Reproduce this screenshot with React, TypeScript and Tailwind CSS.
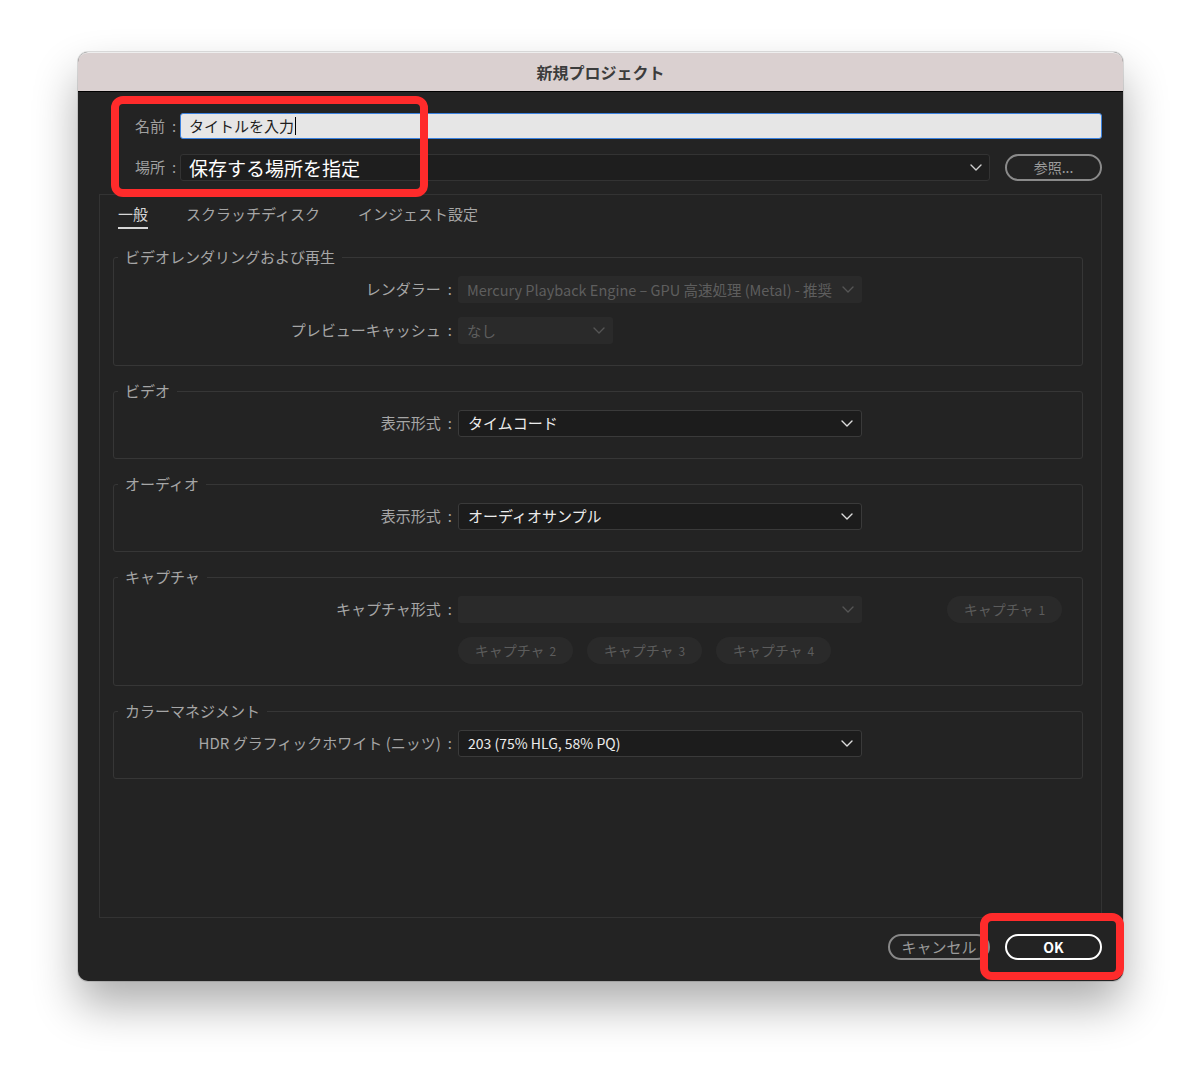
import React from 'react';

const FONT = "font-['Noto_Sans_CJK_JP','Noto_Sans',sans-serif]";

function Chevron({ color }: { color: string }) {
  return (
    <svg width="12" height="7" viewBox="0 0 12 7" fill="none" className="shrink-0">
      <path d="M1 1l5 5 5-5" stroke={color} strokeWidth="1.4" strokeLinecap="round" strokeLinejoin="round" />
    </svg>
  );
}

function Select({ value, width, disabled }: { value: string; width: string; disabled?: boolean }) {
  return (
    <div
      className={`${width} h-[27px] flex items-center justify-between pl-[9px] pr-[8px] rounded-[3px] ${
        disabled ? 'bg-[#2a2a2a] text-[#5e5e5e] text-[14.5px]' : 'bg-[#1c1c1c] border border-[#3a3a3a] text-[#ececec] text-[15px]'
      }`}
    >
      <span className="truncate">{value}</span>
      <Chevron color={disabled ? '#555555' : '#dddddd'} />
    </div>
  );
}

function Label({ text }: { text: string }) {
  return (
    <>
      {text}
      <span className="ml-[7px]">:</span>
    </>
  );
}

function Row({ label, children }: { label: string; children: React.ReactNode }) {
  return (
    <div className="flex items-center">
      <div className="w-[338px] text-right text-[15px] text-[#a6a6a6] whitespace-nowrap">
        <Label text={label} />
      </div>
      <div className="ml-[6px] flex items-center">{children}</div>
    </div>
  );
}

function Group({ title, children }: { title: string; children: React.ReactNode }) {
  return (
    <fieldset className="border border-[#363636] rounded-[3px] pb-[21px]">
      <legend className="ml-[4px] px-[7px] text-[15px] leading-[20px] text-[#a6a6a6]">{title}</legend>
      <div className="mt-[9px] flex flex-col gap-[14px]">{children}</div>
    </fieldset>
  );
}

function CaptureButton({ n }: { n: number }) {
  return (
    <div className="w-[115px] h-[27px] rounded-full bg-[#2a2a2a] text-[#5c5c5c] text-[14px] flex items-center justify-center gap-[5px]">
      キャプチャ<span className="text-[12px]">{n}</span>
    </div>
  );
}

export default function App() {
  return (
    <div className={`min-h-[1084px] bg-white pt-[52px] pl-[78px] ${FONT}`}>
      <div className="relative w-[1045px] h-[929px] rounded-[10px] bg-[#232323] flex flex-col shadow-[0_24px_45px_rgba(0,0,0,0.32),0_0_0_1px_rgba(0,0,0,0.12)]">
        <div className="h-[40px] shrink-0 rounded-t-[10px] bg-[#dad0d0] border-t border-[#eee] border-b border-b-black flex items-center justify-center">
          <span className="text-[16px] font-bold text-[#3c3c3c]">新規プロジェクト</span>
        </div>

        <div className="flex-1 flex flex-col px-[21px] pt-[21px] pb-[21px]">
          <div className="flex items-center pl-[36px]">
            <div className="w-[45px] text-[15px] text-[#a0a0a0] whitespace-nowrap">
              <Label text="名前" />
            </div>
            <div className="flex-1 h-[26px] bg-[#e6e6e6] border border-[#3b82e0] rounded-[3px] flex items-center pl-[8px] text-[15px] text-[#1e1e1e]">
              タイトルを入力<span className="ml-[1px] w-[1px] h-[18px] bg-black" />
            </div>
          </div>

          <div className="flex items-center pl-[36px] mt-[15px]">
            <div className="w-[45px] text-[15px] text-[#a0a0a0] whitespace-nowrap">
              <Label text="場所" />
            </div>
            <div className="flex-1 h-[27px] bg-[#1e1e1e] border border-[#333] rounded-[3px] flex items-center justify-between pl-[8px] pr-[7px]">
              <span className="text-[19px] text-white leading-none">保存する場所を指定</span>
              <Chevron color="#d0d0d0" />
            </div>
            <button className="ml-[15px] w-[97px] h-[27px] rounded-full border-2 border-[#8a8a8a] text-[14px] text-[#9c9c9c]">
              参照...
            </button>
          </div>

          <div className="mt-[13px] flex-1 border border-[#333] pt-[9px] pl-[13px] pr-[18px]">
            <div className="flex items-start ml-[5px] gap-[38px] text-[15px] leading-[20px]">
              <div className="pb-[3px] border-b-2 border-[#d6d6d6] text-[#d6d6d6]">一般</div>
              <div className="pb-[3px] text-[#a6a6a6]">スクラッチディスク</div>
              <div className="pb-[3px] text-[#a6a6a6]">インジェスト設定</div>
            </div>

            <div className="mt-[18px] flex flex-col gap-[15px]">
              <Group title="ビデオレンダリングおよび再生">
                <Row label="レンダラー">
                  <Select width="w-[404px]" disabled value="Mercury Playback Engine – GPU 高速処理 (Metal) - 推奨" />
                </Row>
                <Row label="プレビューキャッシュ">
                  <Select width="w-[155px]" disabled value="なし" />
                </Row>
              </Group>

              <Group title="ビデオ">
                <Row label="表示形式">
                  <Select width="w-[404px]" value="タイムコード" />
                </Row>
              </Group>

              <Group title="オーディオ">
                <Row label="表示形式">
                  <Select width="w-[404px]" value="オーディオサンプル" />
                </Row>
              </Group>

              <Group title="キャプチャ">
                <Row label="キャプチャ形式">
                  <Select width="w-[404px]" disabled value="" />
                  <div className="ml-[85px]">
                    <CaptureButton n={1} />
                  </div>
                </Row>
                <div className="flex items-center ml-[344px] gap-[14px]">
                  <CaptureButton n={2} />
                  <CaptureButton n={3} />
                  <CaptureButton n={4} />
                </div>
              </Group>

              <Group title="カラーマネジメント">
                <Row label="HDR グラフィックホワイト (ニッツ)">
                  <div className="w-[404px] h-[27px] flex items-center justify-between pl-[9px] pr-[8px] rounded-[3px] bg-[#1c1c1c] border border-[#3a3a3a] text-[14px] text-[#ececec]">
                    <span>203 (75% HLG, 58% PQ)</span>
                    <Chevron color="#dddddd" />
                  </div>
                </Row>
              </Group>
            </div>
          </div>

          <div className="mt-[16px] flex justify-end gap-[15px]">
            <button className="w-[102px] h-[26px] rounded-full border-2 border-[#888] text-[15px] text-[#9a9a9a] flex items-center justify-center">
              キャンセル
            </button>
            <button className="w-[97px] h-[26px] rounded-full border-2 border-white text-[14px] font-bold text-white flex items-center justify-center">
              OK
            </button>
          </div>
        </div>

        {/* annotation boxes */}
        <div className="absolute left-[33px] top-[44px] w-[317px] h-[101px] border-[8px] border-[#ff2b2b] rounded-[12px]" />
        <div className="absolute left-[902px] top-[861px] w-[144px] h-[67px] border-[8px] border-[#ff2b2b] rounded-[12px]" />
      </div>
    </div>
  );
}
